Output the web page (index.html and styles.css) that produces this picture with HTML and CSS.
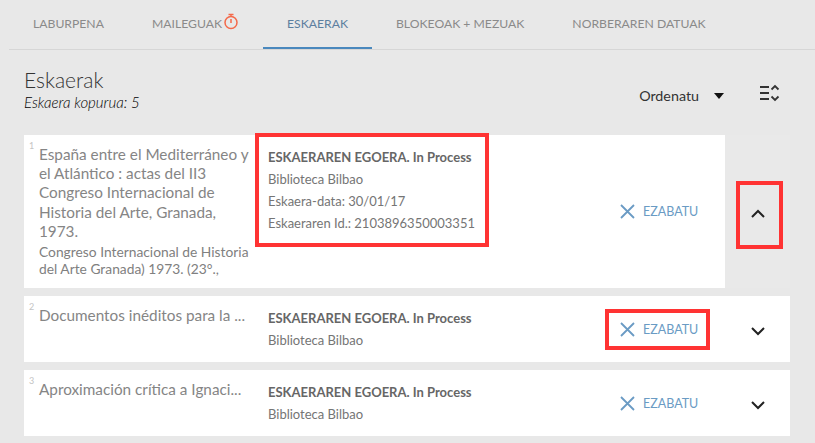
FILE: index.html
```html
<!DOCTYPE html>
<html lang="en">
<head>
    <meta charset="UTF-8">
    <meta name="viewport" content="width=device-width, initial-scale=1.0">
    <title>Eskaerak</title>
    <link rel="stylesheet" href="styles.css">
</head>
<body>

<nav class="tabs">
    <a class="tab">LABURPENA</a>
    <a class="tab">MAILEGUAK<svg class="timer" width="16" height="17" viewBox="0 0 16 17"><path d="M5.500 1.500h5M8 1.500v2" stroke="#f4694a" stroke-width="1.400" fill="none"/><circle cx="8" cy="9.500" r="6" stroke="#f4694a" stroke-width="1.500" fill="none"/><path d="M8 6v4" stroke="#f4694a" stroke-width="1.500" fill="none"/></svg></a>
    <a class="tab active">ESKAERAK</a>
    <a class="tab">BLOKEOAK + MEZUAK</a>
    <a class="tab">NORBERAREN DATUAK</a>
</nav>

<header class="list-head">
    <div>
        <h1>Eskaerak</h1>
        <p class="count">Eskaera kopurua: 5</p>
    </div>
    <div class="sort">
        <span>Ordenatu</span>
        <span class="caret"></span>
        <svg class="expand" width="20" height="18" viewBox="0 0 20 18"><path d="M0 3h9M0 9h9M0 15h9" stroke="#333" stroke-width="2" fill="none"/><path d="M11.500 5.500l3.500-3.500 3.500 3.500M11.500 12.500l3.500 3.500 3.500-3.500" stroke="#333" stroke-width="1.800" fill="none"/></svg>
    </div>
</header>

<section class="requests">
    <article class="request open">
        <span class="num">1</span>
        <div class="title-col">
            <h3>España entre el Mediterráneo y el Atlántico : actas del II3 Congreso Internacional de Historia del Arte, Granada, 1973.</h3>
            <p class="author">Congreso Internacional de Historia del Arte Granada) 1973. (23°.,</p>
        </div>
        <div class="info">
            <p><b>ESKAERAREN EGOERA. In Process</b></p>
            <p>Biblioteca Bilbao</p>
            <p>Eskaera-data: 30/01/17</p>
            <p>Eskaeraren Id.: 2103896350003351</p>
        </div>
        <a class="remove"><svg width="15" height="15" viewBox="0 0 15 15"><path d="M1 1l13 13M14 1L1 14" stroke="#6a9bc4" stroke-width="1.800" fill="none"/></svg>EZABATU</a>
        <button class="toggle"><svg width="16" height="10" viewBox="0 0 16 10"><path d="M2 8l6-6 6 6" stroke="#222" stroke-width="2" fill="none"/></svg></button>
    </article>

    <article class="request">
        <span class="num">2</span>
        <div class="title-col">
            <h3>Documentos inéditos para la ...</h3>
        </div>
        <div class="info">
            <p><b>ESKAERAREN EGOERA. In Process</b></p>
            <p>Biblioteca Bilbao</p>
        </div>
        <a class="remove"><svg width="15" height="15" viewBox="0 0 15 15"><path d="M1 1l13 13M14 1L1 14" stroke="#6a9bc4" stroke-width="1.800" fill="none"/></svg>EZABATU</a>
        <button class="toggle"><svg width="16" height="10" viewBox="0 0 16 10"><path d="M2 2l6 6 6-6" stroke="#222" stroke-width="2" fill="none"/></svg></button>
    </article>

    <article class="request">
        <span class="num">3</span>
        <div class="title-col">
            <h3>Aproximación crítica a Ignaci...</h3>
        </div>
        <div class="info">
            <p><b>ESKAERAREN EGOERA. In Process</b></p>
            <p>Biblioteca Bilbao</p>
        </div>
        <a class="remove"><svg width="15" height="15" viewBox="0 0 15 15"><path d="M1 1l13 13M14 1L1 14" stroke="#6a9bc4" stroke-width="1.800" fill="none"/></svg>EZABATU</a>
        <button class="toggle"><svg width="16" height="10" viewBox="0 0 16 10"><path d="M2 2l6 6 6-6" stroke="#222" stroke-width="2" fill="none"/></svg></button>
    </article>
</section>

<!-- red annotation boxes drawn over the screenshot -->
<div class="mark mark-info"></div>
<div class="mark mark-toggle"></div>
<div class="mark mark-remove"></div>

</body>
</html>
```

FILE: styles.css
```css
html, body {
    height: 100%;
}
body {
    font-family: Lato, "Noto Sans", sans-serif;
    margin: 0;
    background-color: #e8e8e8;
    color: #333;
    overflow: hidden;
    position: relative;
}
.tabs {
    display: flex;
    margin-left: 9px;
    height: 50px;
    box-sizing: border-box;
    border-bottom: 1px solid #d6d6d6;
}
.tab {
    display: flex;
    align-items: center;
    padding: 0 24px 2px;
    height: 49px;
    box-sizing: border-box;
    font-size: 12.200px;
    color: #8a8a8a;
    white-space: nowrap;
}
.tab.active {
    color: #5d7f9f;
    border-bottom: 2px solid #4a88bd;
    padding-bottom: 0;
}
.timer {
    margin: -5px 0 0 1px;
}
.list-head {
    display: flex;
    justify-content: space-between;
    padding: 17px 35px 0 24px;
    height: 85px;
    box-sizing: border-box;
}
h1 {
    margin: 0;
    font-size: 21px;
    font-weight: 300;
    line-height: 26px;
    color: #333;
}
.count {
    margin: 0;
    font-size: 15px;
    font-style: italic;
    font-weight: 300;
    line-height: 18px;
    color: #000;
}
.sort {
    display: flex;
    align-items: center;
    height: 56px;
    font-size: 14.300px;
    color: #333;
}
.caret {
    width: 0;
    height: 0;
    margin: 2px 0 0 15px;
    border-left: 5px solid transparent;
    border-right: 5px solid transparent;
    border-top: 6px solid #111;
}
.expand {
    margin: 0 0 4px 36px;
}
.requests {
    display: flex;
    flex-direction: column;
    gap: 8px;
    margin: 0 25px 0 24px;
}
.request {
    display: flex;
    background-color: #fff;
    height: 66px;
    position: relative;
}
.request.open {
    height: 153px;
}
.num {
    width: 15px;
    padding: 5px 0 0 5px;
    box-sizing: border-box;
    font-size: 9px;
    line-height: 12px;
    color: #c4c4c4;
    flex-shrink: 0;
}
.title-col {
    width: 216px;
    padding-top: 10px;
    box-sizing: border-box;
    flex-shrink: 0;
}
h3 {
    margin: 0;
    font-size: 15.300px;
    font-weight: 400;
    line-height: 19.200px;
    color: #858585;
}
.author {
    margin: 3px 0 0;
    font-size: 13.800px;
    line-height: 16.500px;
    color: #808080;
}
.info {
    width: 353px;
    padding: 11px 0 0 13px;
    box-sizing: border-box;
    font-size: 13px;
    line-height: 22px;
    color: #757575;
    flex-shrink: 0;
}
.info p {
    margin: 0;
}
.info b {
    color: #666;
}
.remove {
    display: flex;
    align-items: center;
    gap: 8px;
    width: 117px;
    height: 66px;
    padding-left: 12px;
    box-sizing: border-box;
    font-size: 12.500px;
    color: #6a9bc4;
    flex-shrink: 0;
}
.open .remove {
    height: 153px;
}
.toggle {
    width: 65px;
    border: none;
    padding: 4px 0 0;
    background: none;
    display: flex;
    align-items: center;
    justify-content: center;
    flex-shrink: 0;
}
.open .toggle {
    background-color: #e9e9e9;
}
.mark {
    position: absolute;
    box-sizing: border-box;
    border: 4px solid #ff3333;
}
.mark-info {
    left: 255px;
    top: 133px;
    width: 234px;
    height: 114px;
}
.mark-toggle {
    left: 736px;
    top: 181px;
    width: 47px;
    height: 68px;
}
.mark-remove {
    left: 605px;
    top: 309px;
    width: 105px;
    height: 41px;
}
```
